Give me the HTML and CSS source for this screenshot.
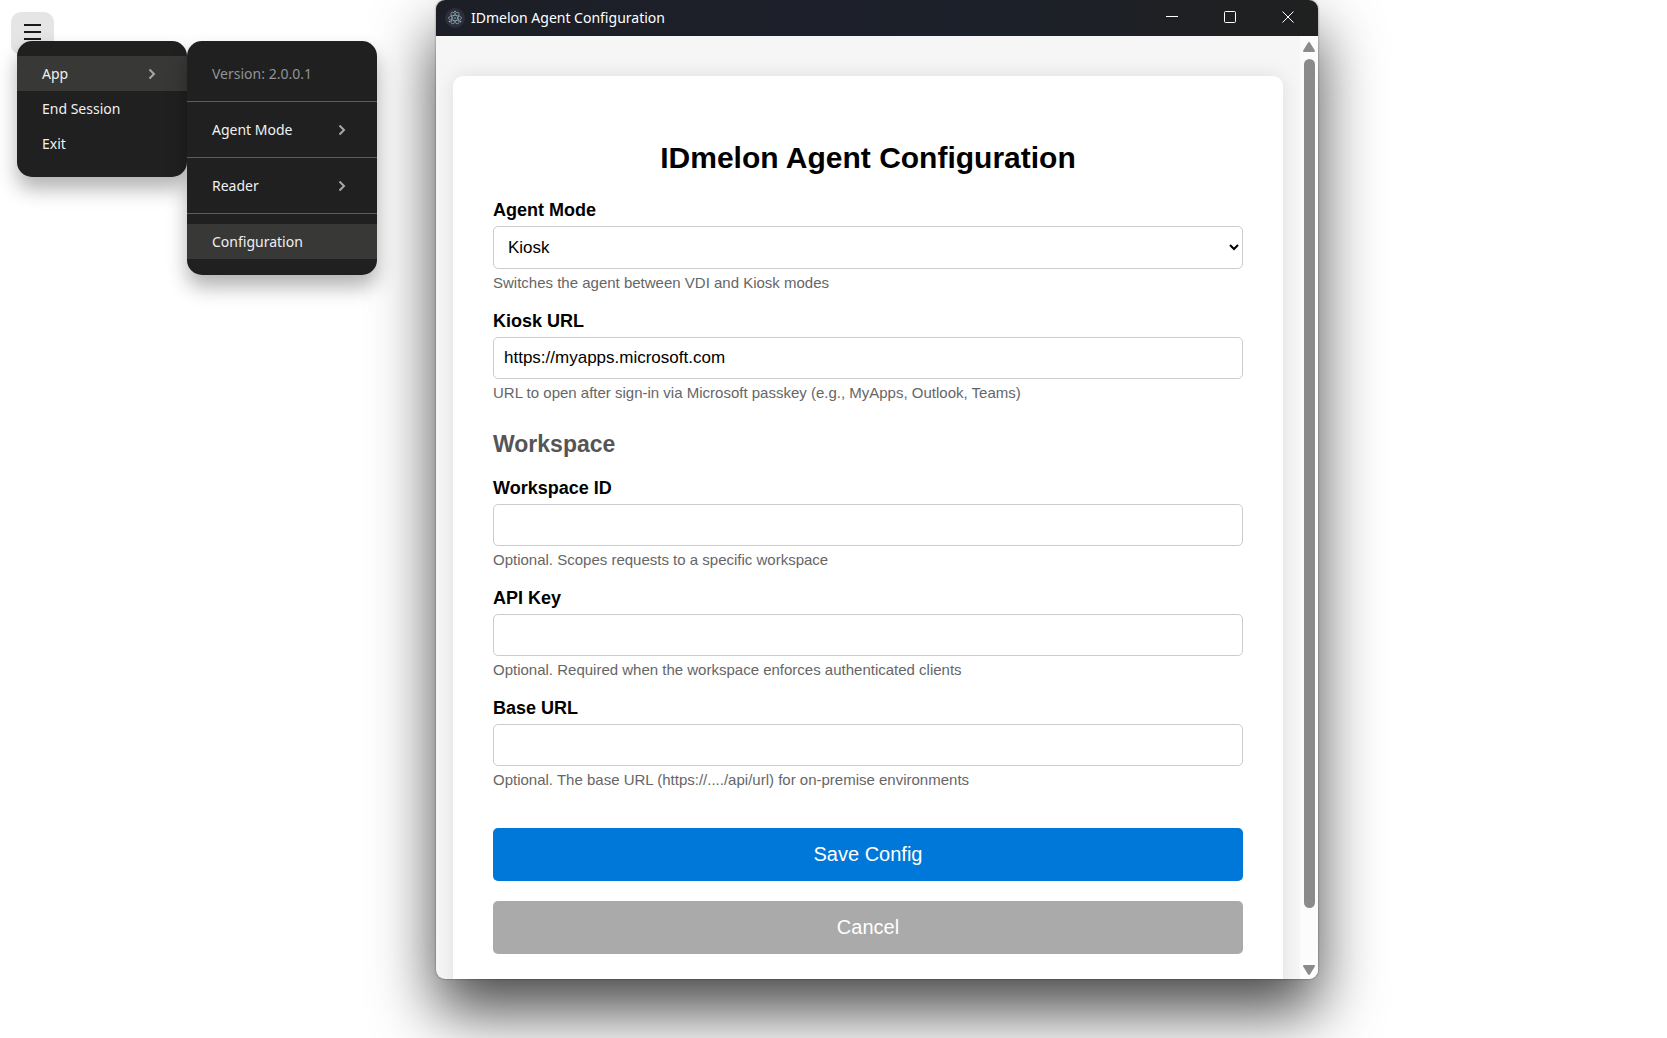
FILE: index.html
```html
<!DOCTYPE html>
<html lang="en">
<head>
<meta charset="utf-8">
<title>IDmelon Agent</title>
<link rel="stylesheet" href="styles.css">
</head>
<body>
<button class="menu-button" type="button" aria-label="Menu">
  <svg width="18" height="18" viewBox="0 0 18 18" aria-hidden="true"><path d="M0 2h17M0 9h17M0 16h17"/></svg>
</button>

<nav class="menus" aria-label="Agent menu">
  <ul class="menu menu-root">
    <li><button class="item active" type="button">App <svg class="chevron" viewBox="0 0 8 12" aria-hidden="true"><path d="M1.5 1.5 6 6l-4.500 4.500"/></svg></button></li>
    <li><button class="item" type="button">End Session</button></li>
    <li><button class="item" type="button">Exit</button></li>
  </ul>
  <ul class="menu menu-sub">
    <li><span class="item muted">Version: 2.0.0.1</span></li>
    <li class="divided"><button class="item" type="button">Agent Mode <svg class="chevron" viewBox="0 0 8 12" aria-hidden="true"><path d="M1.5 1.5 6 6l-4.500 4.500"/></svg></button></li>
    <li class="divided"><button class="item" type="button">Reader <svg class="chevron" viewBox="0 0 8 12" aria-hidden="true"><path d="M1.5 1.5 6 6l-4.500 4.500"/></svg></button></li>
    <li class="divided"><button class="item active" type="button">Configuration</button></li>
  </ul>
</nav>

<section class="window" aria-label="IDmelon Agent Configuration">
  <header class="titlebar">
    <svg class="app-icon" viewBox="0 0 20 20" aria-hidden="true">
      <circle class="disc" cx="10" cy="10" r="10"/>
      <g class="orbits">
        <ellipse cx="10" cy="10" rx="6.500" ry="2.600"/>
        <ellipse cx="10" cy="10" rx="6.500" ry="2.600" transform="rotate(60 10 10)"/>
        <ellipse cx="10" cy="10" rx="6.500" ry="2.600" transform="rotate(120 10 10)"/>
      </g>
      <g class="dots"><circle cx="10" cy="10" r=".8"/><circle cx="10" cy="3.500" r=".8"/><circle cx="4.500" cy="13.500" r=".8"/><circle cx="15.500" cy="13.500" r=".8"/></g>
    </svg>
    <span class="title">IDmelon Agent Configuration</span>
    <div class="controls">
      <button type="button" aria-label="Minimize"><svg viewBox="0 0 12 12" aria-hidden="true"><path d="M0 5.500h12"/></svg></button>
      <button type="button" aria-label="Maximize"><svg viewBox="0 0 12 12" aria-hidden="true"><rect x=".5" y=".5" width="11" height="11" rx="1"/></svg></button>
      <button type="button" aria-label="Close"><svg viewBox="0 0 12 12" aria-hidden="true"><path d="M.5.5l11 11M11.500.5l-11 11"/></svg></button>
    </div>
  </header>
  <div class="viewport">
    <div class="page">
      <form class="card">
        <h1>IDmelon Agent Configuration</h1>
        <div class="field">
          <label for="mode">Agent Mode</label>
          <select id="mode"><option>Kiosk</option><option>VDI</option></select>
          <p class="hint">Switches the agent between VDI and Kiosk modes</p>
        </div>
        <div class="field">
          <label for="kiosk-url">Kiosk URL</label>
          <input id="kiosk-url" type="text" value="https://myapps.microsoft.com">
          <p class="hint">URL to open after sign-in via Microsoft passkey (e.g., MyApps, Outlook, Teams)</p>
        </div>
        <h2>Workspace</h2>
        <div class="field">
          <label for="workspace-id">Workspace ID</label>
          <input id="workspace-id" type="text">
          <p class="hint">Optional. Scopes requests to a specific workspace</p>
        </div>
        <div class="field">
          <label for="api-key">API Key</label>
          <input id="api-key" type="text">
          <p class="hint">Optional. Required when the workspace enforces authenticated clients</p>
        </div>
        <div class="field">
          <label for="base-url">Base URL</label>
          <input id="base-url" type="text">
          <p class="hint">Optional. The base URL (https://..../api/url) for on-premise environments</p>
        </div>
        <div class="actions">
          <button class="save" type="submit">Save Config</button>
          <button class="cancel" type="button">Cancel</button>
        </div>
      </form>
    </div>
    <div class="scrollbar" aria-hidden="true">
      <svg viewBox="0 0 12 10"><path d="M6 1 11 9H1Z"/></svg>
      <span class="thumb"></span>
      <svg class="down" viewBox="0 0 12 10"><path d="M6 9 11 1H1Z"/></svg>
    </div>
  </div>
</section>
</body>
</html>
```
FILE: styles.css
```css
* { box-sizing: border-box; }

body {
  position: relative;
  height: 100vh;
  margin: 0;
  overflow: hidden;
  background: #fff;
  font-family: "Liberation Sans", Arial, sans-serif;
}

button, input, select { font: inherit; }

/* Floating launcher and its menus */
.menu-button {
  position: absolute;
  top: 12px;
  left: 11px;
  width: 43px;
  height: 43px;
  padding: 0;
  border: 0;
  border-radius: 10px;
  background: #e5e5e5;
}
.menu-button svg { display: block; margin: 11px 13px 14px; }
.menu-button path { stroke: #1a1a1a; stroke-width: 2; }

.menus {
  position: absolute;
  z-index: 2;
  top: 41px;
  left: 17px;
  display: flex;
  align-items: flex-start;
  font: 14px/20px "Noto Sans", "Segoe UI", sans-serif;
}
.menu {
  margin: 0;
  padding: 15px 0 16px;
  list-style: none;
  border-radius: 15px;
  background: #202020;
  box-shadow: 0 12px 20px rgba(0, 0, 0, .3);
}
.menu-root { width: 170px; }
.menu-sub { width: 190px; }
.item {
  display: flex;
  align-items: center;
  justify-content: space-between;
  width: 100%;
  height: 35px;
  padding: 0 31px 0 25px;
  border: 0;
  background: none;
  color: #f0f0f0;
  text-align: left;
}
.item.active { background: #383836; }
.item.muted { color: #8f9496; }
.divided {
  margin-top: 10px;
  padding-top: 10px;
  border-top: 1px solid #5c5c5c;
}
.chevron { width: 8px; height: 12px; }
.chevron path { fill: none; stroke: #a8a8a8; stroke-width: 2; }

/* Configuration window */
.window {
  position: absolute;
  top: 0;
  right: 349px;
  bottom: 59px;
  left: 436px;
  display: flex;
  flex-direction: column;
  overflow: hidden;
  border-radius: 9px;
  background: #f6f6f6;
  box-shadow: 0 0 2px rgba(0, 0, 0, .5), 0 32px 62px rgba(0, 0, 0, .72);
}
.titlebar {
  display: flex;
  flex: none;
  align-items: center;
  height: 36px;
  padding-left: 9px;
  background: linear-gradient(90deg, #1d1f27, #1c202a 60%, #202020);
  color: #fff;
  font: 14px/20px "Noto Sans", "Segoe UI", sans-serif;
}
.app-icon { width: 20px; height: 20px; margin-right: 6px; }
.disc { fill: #2c2f3b; }
.orbits { fill: none; stroke: #86a5ae; stroke-width: .8; }
.dots { fill: #9fc3cb; }
.controls {
  display: flex;
  align-self: flex-start;
  margin-left: auto;
  padding-right: 1px;
}
.controls button {
  display: flex;
  align-items: center;
  justify-content: center;
  width: 58px;
  height: 34px;
  padding: 0;
  border: 0;
  background: none;
}
.controls svg { width: 12px; height: 12px; }
.controls path, .controls rect { fill: none; stroke: #fff; }

.viewport {
  display: flex;
  flex: 1;
  min-height: 0;
}
.page {
  flex: 1;
  padding: 40px 17px;
  overflow: hidden;
}
.card {
  padding: 64px 40px 40px;
  border-radius: 10px;
  background: #fff;
  box-shadow: 0 0 20px rgba(0, 0, 0, .1);
}
h1 {
  margin: 0 0 24px;
  font-size: 30px;
  line-height: 36px;
  text-align: center;
}
h2 {
  margin: 28px 0 20px;
  color: #555;
  font-size: 23px;
  line-height: 28px;
}
.field + .field { margin-top: 19px; }
label {
  display: block;
  margin-bottom: 6px;
  font-size: 18px;
  font-weight: 700;
  line-height: 20px;
}
input, select {
  display: block;
  width: 100%;
  height: 42px;
  padding: 0 10px;
  border: 1px solid #ccc;
  border-radius: 5px;
  background: #fff;
  color: #000;
  font-size: 17px;
}
select { height: 43px; }
.hint {
  margin: 5px 0 0;
  color: #666;
  font-size: 15px;
  line-height: 18px;
}
.actions {
  display: grid;
  gap: 20px;
  margin-top: 39px;
}
.actions button {
  height: 53px;
  border: 0;
  border-radius: 5px;
  color: #fff;
  font-size: 20px;
}
.save { background: #0078d9; }
.cancel { background: #aaa; }

.scrollbar {
  display: flex;
  flex: none;
  flex-direction: column;
  align-items: center;
  width: 18px;
  padding: 6px 0 4px;
  background: #fcfcfc;
}
.scrollbar svg { width: 12px; height: 10px; fill: #8b8b8b; }
.scrollbar path { stroke: #8b8b8b; stroke-width: 2; stroke-linejoin: round; }
.thumb {
  flex: 1;
  width: 11px;
  margin: 7px 0 57px;
  border-radius: 6px;
  background: #8b8b8b;
}
```
